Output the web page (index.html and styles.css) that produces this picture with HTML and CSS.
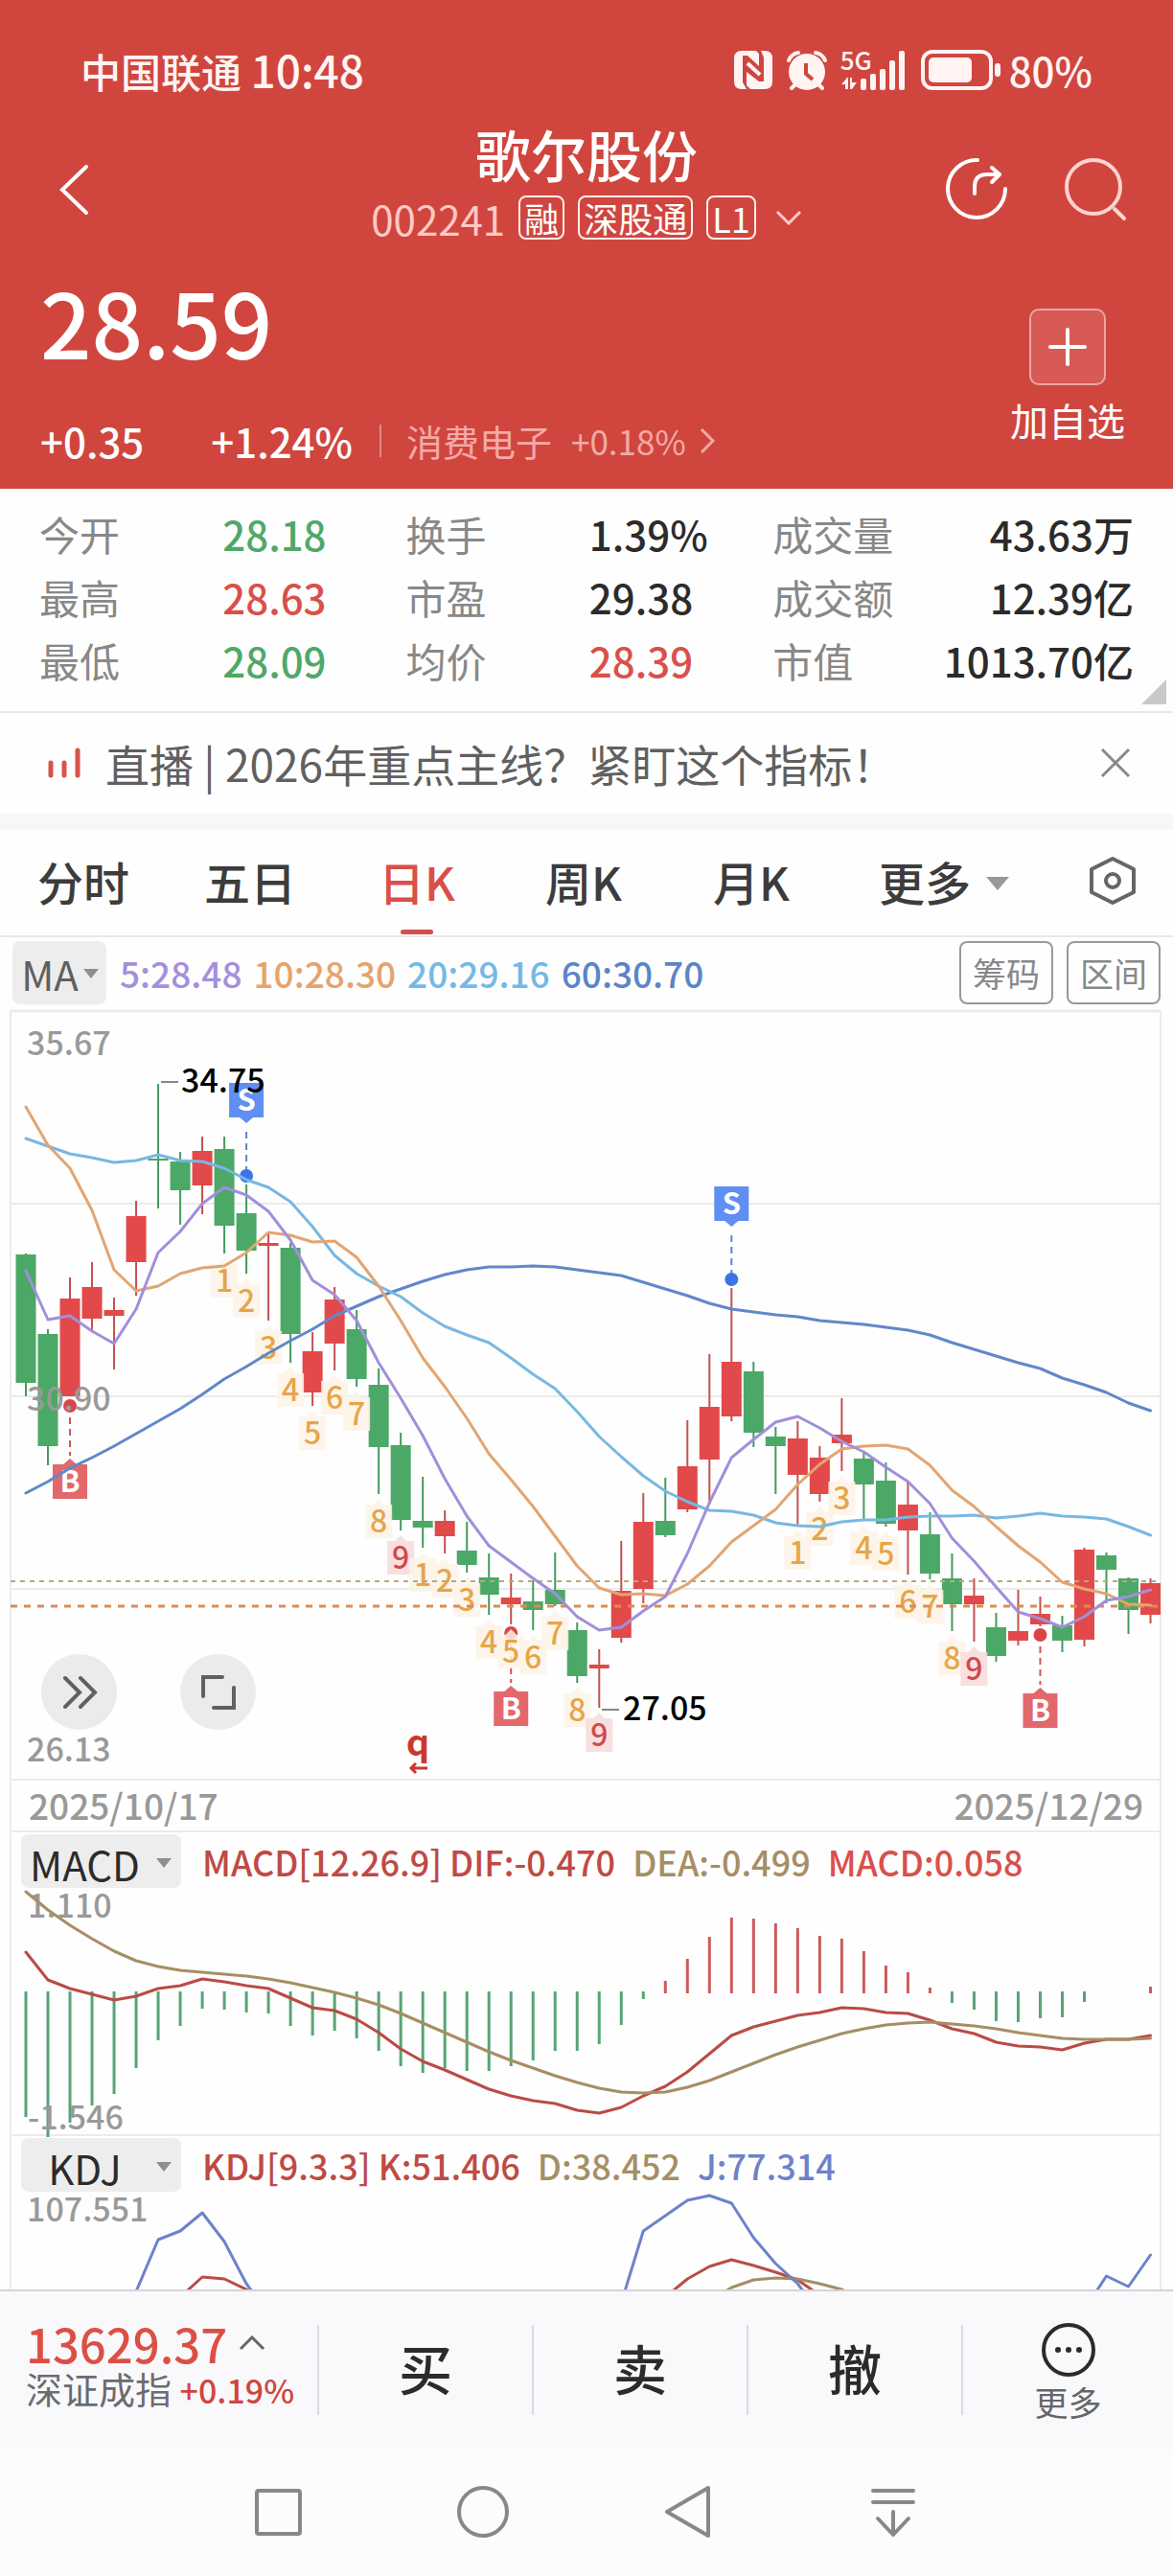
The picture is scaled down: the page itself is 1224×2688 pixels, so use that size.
FILE: index.html
```html
<!DOCTYPE html>
<html lang="zh-CN">
<head>
    <meta charset="UTF-8">
    <meta name="viewport" content="width=device-width, initial-scale=1.0">
    <title>歌尔股份 002241</title>
    <link rel="stylesheet" href="styles.css">
</head>
<body>

<header class="top">
    <div class="status">
        <span>中国联通 <span class="clock">10:48</span></span>
        <div class="status-icons">
            <svg width="42" height="42" viewBox="0 0 42 42">
                <path fill="#fff4f2" d="M9 1H24L27 4V17L15 6H10V34L14 41H9Q1 41 1 33V9Q1 1 9 1Z"/>
                <path fill="#fff4f2" d="M29 1H33Q41 1 41 9V33Q41 41 33 41H18L14 37V23L27 33H32V8Z"/>
                <path fill="none" stroke="#fff4f2" stroke-width="4" d="M15 14L28 26"/>
            </svg>
            <svg class="alarm" width="42" height="42" viewBox="0 0 42 42">
                <circle cx="21" cy="23" r="19" fill="#fff4f2"/>
                <path d="M2 11Q5 4 12 3M40 11Q37 4 30 3M5 40L10 35M37 40L32 35" fill="none" stroke="#fff4f2" stroke-width="4" stroke-linecap="round"/>
                <path d="M20 14V25L27 31" fill="none" stroke="#d0463f" stroke-width="4"/>
            </svg>
            <div class="signal">
                <span>5G</span>
                <svg width="70" height="42" viewBox="0 0 70 42" fill="#fff4f2">
                    <path d="M1 36L7 29H8V41H5V36ZM10 29H12V34H17L12 41H10Z"/>
                    <rect x="21" y="30" width="6" height="12" rx="2"/>
                    <rect x="31" y="25" width="6" height="17" rx="2"/>
                    <rect x="41" y="20" width="6" height="22" rx="2"/>
                    <rect x="51" y="11" width="6" height="31" rx="2"/>
                    <rect x="61" y="1" width="6" height="41" rx="2"/>
                </svg>
            </div>
            <svg width="84" height="42" viewBox="0 0 84 42">
                <rect x="2" y="2" width="71" height="38" rx="10" fill="none" stroke="#fff4f2" stroke-width="4"/>
                <rect x="8" y="8" width="45" height="26" rx="5" fill="#fff4f2"/>
                <rect x="77" y="14" width="6" height="14" rx="3" fill="#fff4f2"/>
            </svg>
            <span class="battery">80%</span>
        </div>
    </div>

    <div class="titlebar">
        <button type="button" class="back" aria-label="返回">
            <svg width="32" height="54" viewBox="0 0 32 54" fill="none" stroke="#fff" stroke-width="4" stroke-linecap="round"><path d="M28 3L3 27L28 51"/></svg>
        </button>
        <div class="title">
            <h1>歌尔股份</h1>
            <div class="code">
                <span class="code-no">002241</span>
                <span class="tag">融</span>
                <span class="tag">深股通</span>
                <span class="tag">L1</span>
                <svg width="28" height="16" viewBox="0 0 28 16" fill="none" stroke="#ffc9c4" stroke-width="3"><path d="M2 2L14 14L26 2"/></svg>
            </div>
        </div>
        <div class="actions">
            <button type="button" aria-label="分享">
                <svg width="66" height="66" viewBox="0 0 66 66" fill="none" stroke="#fff" stroke-width="4" stroke-linecap="round" stroke-linejoin="round">
                    <path d="M34 2A30 30 0 1 0 63 32"/>
                    <path d="M31 37V30Q31 17 44 17H57M49 10L57 17L49 25"/>
                </svg>
            </button>
            <button type="button" aria-label="搜索">
                <svg width="66" height="66" viewBox="0 0 66 66" fill="none" stroke="#ffd3cf" stroke-width="4" stroke-linecap="round">
                    <circle cx="31" cy="30" r="28"/>
                    <path d="M53 53L63 63"/>
                </svg>
            </button>
        </div>
    </div>

    <div class="quote">
        <div>
            <div class="price">28.59</div>
            <div class="change">
                <span>+0.35</span>
                <span>+1.24%</span>
                <a href="#" class="sector">
                    <span class="sector-name">消费电子</span>
                    <span>+0.18%</span>
                    <svg width="16" height="28" viewBox="0 0 16 28" fill="none" stroke="#f3aaa6" stroke-width="3"><path d="M2 2L14 14L2 26"/></svg>
                </a>
            </div>
        </div>
        <button type="button" class="add">
            <span class="add-box">
                <svg width="40" height="40" viewBox="0 0 40 40" stroke="#fff" stroke-width="4" stroke-linecap="round"><path d="M20 2V38M2 20H38"/></svg>
            </span>
            加自选
        </button>
    </div>
</header>

<section class="stats">
    <table>
        <tr><th>今开</th><td class="green">28.18</td><th>换手</th><td>1.39%</td><th>成交量</th><td>43.63万</td></tr>
        <tr><th>最高</th><td class="red">28.63</td><th>市盈</th><td>29.38</td><th>成交额</th><td>12.39亿</td></tr>
        <tr><th>最低</th><td class="green">28.09</td><th>均价</th><td class="red">28.39</td><th>市值</th><td>1013.70亿</td></tr>
    </table>
</section>

<section class="live">
    <svg width="34" height="32" viewBox="0 0 34 32" stroke="#d9534a" stroke-width="5" stroke-linecap="round"><path d="M3 16V29M17 16V29M31 3V29"/></svg>
    <a href="#">直播 | 2026年重点主线？紧盯这个指标！</a>
    <button type="button" aria-label="关闭">
        <svg width="32" height="32" viewBox="0 0 32 32" stroke="#888" stroke-width="3"><path d="M2 2L30 30M30 2L2 30"/></svg>
    </button>
</section>

<nav class="tabs">
    <button type="button">分时</button>
    <button type="button">五日</button>
    <button type="button" class="active">日K</button>
    <button type="button">周K</button>
    <button type="button">月K</button>
    <button type="button" class="more">更多</button>
    <button type="button" aria-label="设置">
        <svg width="50" height="52" viewBox="0 0 50 52" fill="none" stroke="#666" stroke-width="4" stroke-linejoin="round">
            <path d="M25 3L47 14V38L25 49L3 38V14Z"/>
            <circle cx="25" cy="26" r="7"/>
        </svg>
    </button>
</nav>

<div class="ma-row">
    <div class="pick pick-ma">
        <select aria-label="主图指标"><option>MA</option><option>BOLL</option></select>
    </div>
    <div class="ma-values">
        <span class="ma5">5:28.48</span>
        <span class="ma10">10:28.30</span>
        <span class="ma20">20:29.16</span>
        <span class="ma60">60:30.70</span>
    </div>
    <button type="button">筹码</button>
    <button type="button">区间</button>
</div>

<main class="charts">
    <div class="kline">
        <svg id="kline" viewBox="12 0 1198 804"></svg>
        <div class="tools">
            <button type="button" aria-label="快进">
                <svg width="36" height="36" viewBox="0 0 36 36"><path d="M3 3L18 18L3 33M19 3L34 18L19 33"/></svg>
            </button>
            <button type="button" aria-label="全屏">
                <svg width="36" height="36" viewBox="0 0 36 36"><path d="M2 22V2H22M34 13V34H13"/></svg>
            </button>
        </div>
    </div>
    <div class="dates"><span>2025/10/17</span><span>2025/12/29</span></div>

    <section class="panel">
        <div class="panel-head">
            <div class="pick">
                <select aria-label="副图指标一"><option>MACD</option><option>KDJ</option></select>
            </div>
            <span class="dif">MACD[12.26.9] DIF:-0.470</span>
            <span class="dea">DEA:-0.499</span>
            <span class="red">MACD:0.058</span>
        </div>
        <svg id="macd" viewBox="12 62 1198 253"></svg>
    </section>

    <section class="panel panel-cut">
        <div class="panel-head">
            <div class="pick">
                <select aria-label="副图指标二"><option>KDJ</option><option>MACD</option></select>
            </div>
            <span class="dif">KDJ[9.3.3] K:51.406</span>
            <span class="dea">D:38.452</span>
            <span class="jval">J:77.314</span>
        </div>
        <svg id="kdj" viewBox="12 62 1198 98"></svg>
    </section>
</main>

<footer class="trade">
    <button type="button" class="index">
        <span class="index-value">13629.37
            <svg width="28" height="16" viewBox="0 0 28 16" fill="none" stroke="#666" stroke-width="3"><path d="M2 14L14 2L26 14"/></svg>
        </span>
        <span class="index-name">深证成指 <em>+0.19%</em></span>
    </button>
    <button type="button">买</button>
    <button type="button">卖</button>
    <button type="button">撤</button>
    <button type="button" class="trade-more">
        <svg width="56" height="56" viewBox="0 0 56 56">
            <circle cx="28" cy="28" r="26" fill="none" stroke="#2b2b2b" stroke-width="4"/>
            <g fill="#2b2b2b"><circle cx="17" cy="28" r="3"/><circle cx="28" cy="28" r="3"/><circle cx="39" cy="28" r="3"/></g>
        </svg>
        更多
    </button>
</footer>

<div class="sysnav">
    <button type="button" aria-label="最近任务"><svg width="56" height="56" viewBox="0 0 56 56"><rect x="6" y="6" width="45" height="45" rx="2"/></svg></button>
    <button type="button" aria-label="主页"><svg width="56" height="56" viewBox="0 0 56 56"><circle cx="28" cy="28" r="25"/></svg></button>
    <button type="button" aria-label="后退"><svg width="56" height="56" viewBox="0 0 56 56"><path d="M49 3V53L6 28Z"/></svg></button>
    <button type="button" aria-label="收起"><svg width="56" height="56" viewBox="0 0 56 56"><path d="M7 6H49M7 18H49M28 28V52M12 35L28 52L44 35"/></svg></button>
</div>

<script src="script.js"></script>
</body>
</html>
```
FILE: styles.css
```css
* {
    box-sizing: border-box;
}

body {
    margin: 0;
    min-height: 100vh;
    background-color: #fefefe;
    color: #2b2b2b;
    font-family: "Noto Sans CJK SC", "Noto Sans", sans-serif;
    font-size: 36px;
}

button,
select {
    margin: 0;
    padding: 0;
    border: none;
    background: none;
    color: inherit;
    font: inherit;
    cursor: pointer;
}

a {
    color: inherit;
    text-decoration: none;
}

svg {
    display: block;
}

.red {
    color: #d9504a;
}

.green {
    color: #50a868;
}

/* Header */
.top {
    background-color: #d0463f;
    color: #fff;
}

.status {
    display: flex;
    justify-content: space-between;
    align-items: center;
    height: 126px;
    padding: 20px 84px 0;
    color: #fff4f2;
    font-size: 42px;
    font-weight: 500;
    line-height: 48px;
}

.clock {
    font-size: 46px;
}

.status-icons {
    display: flex;
    align-items: center;
    gap: 14px;
}

.signal {
    position: relative;
}

.signal span {
    position: absolute;
    top: 0;
    left: 0;
    font-size: 26px;
    line-height: 20px;
}

.battery {
    margin-left: -6px;
}

.titlebar {
    display: grid;
    grid-template-columns: 1fr auto 1fr;
    align-items: center;
    padding: 2px 48px 0;
}

.back {
    justify-self: start;
    margin-left: 14px;
}

.title {
    display: flex;
    flex-direction: column;
    align-items: center;
    height: 140px;
}

h1 {
    margin: 0;
    font-size: 58px;
    font-weight: 500;
    line-height: 64px;
}

.code {
    display: flex;
    align-items: center;
    gap: 14px;
    height: 70px;
    font-size: 36px;
}

.code-no {
    color: #ffc9c4;
    font-size: 42px;
}

.code svg {
    margin-left: 6px;
}

.tag {
    padding: 0 4px;
    border: 2px solid #ffeeec;
    border-radius: 8px;
    line-height: 42px;
}

.actions {
    display: flex;
    justify-content: flex-end;
    gap: 58px;
}

.quote {
    display: flex;
    justify-content: space-between;
    height: 242px;
    padding: 12px 50px 0 42px;
}

.price {
    font-size: 94px;
    font-weight: 500;
    line-height: 108px;
}

.change {
    display: flex;
    align-items: center;
    gap: 70px;
    margin-top: 42px;
    font-size: 42px;
    font-weight: 500;
    line-height: 60px;
}

.sector {
    display: flex;
    align-items: center;
    gap: 14px;
    margin-left: -42px;
    padding-left: 26px;
    border-left: 2px solid #e08a85;
    color: #f3aaa6;
    font-size: 35px;
    font-weight: 400;
    line-height: 34px;
}

.sector-name {
    margin-right: 6px;
    font-size: 38px;
}

.add {
    display: flex;
    flex-direction: column;
    align-items: center;
    gap: 10px;
    margin-top: 42px;
    font-size: 40px;
    line-height: 52px;
}

.add-box {
    display: flex;
    align-items: center;
    justify-content: center;
    width: 80px;
    height: 80px;
    border: 2px solid #eaa5a1;
    border-radius: 10px;
    background-color: #d75a54;
}

/* Figures */
.stats {
    position: relative;
    height: 234px;
    padding: 14px 41px 0;
    border-bottom: 2px solid #e8e8e8;
}

.stats::after {
    content: "";
    position: absolute;
    right: 7px;
    bottom: 7px;
    border-left: 26px solid transparent;
    border-bottom: 26px solid #c9c9c9;
}

.stats table {
    width: 100%;
    table-layout: fixed;
    border-collapse: collapse;
}

.stats th,
.stats td {
    height: 66px;
    padding: 0;
    text-align: left;
    font-size: 42px;
    font-weight: 400;
    line-height: 66px;
    white-space: nowrap;
}

.stats td {
    font-weight: 500;
}

.stats th {
    color: #888;
}

.stats th:nth-child(5) {
    width: 11%;
}

.stats td:last-child {
    width: 22%;
    text-align: right;
}

/* Live banner */
.live {
    display: flex;
    align-items: center;
    gap: 26px;
    height: 122px;
    padding: 0 44px 2px 50px;
    border-bottom: 17px solid #f7f7f7;
    color: #606060;
    font-size: 46px;
}

.live a {
    flex: 1;
}

/* Period tabs */
.tabs {
    display: grid;
    grid-template-columns: 174fr 174fr 174fr 174fr 176fr 226fr 126fr;
    height: 112px;
    border-bottom: 2px solid #e8e8e8;
    color: #3c3c3c;
    font-size: 48px;
    font-weight: 500;
}

.tabs button {
    position: relative;
    display: flex;
    align-items: center;
    justify-content: center;
    padding-bottom: 4px;
}

.tabs .active {
    color: #d9504a;
}

.tabs .active::after {
    content: "";
    position: absolute;
    bottom: 1px;
    width: 34px;
    height: 5px;
    border-radius: 3px;
    background-color: #d0504e;
}

.more {
    gap: 16px;
}

.more::after {
    content: "";
    margin-top: 6px;
    border: 12px solid transparent;
    border-top: 14px solid #999;
    border-bottom: none;
}

/* Moving averages */
.ma-row {
    display: flex;
    align-items: center;
    gap: 14px;
    height: 76px;
    padding: 0 13px 2px;
}

.ma-row button {
    width: 98px;
    height: 66px;
    border: 2px solid #999;
    border-radius: 8px;
    color: #888;
    font-size: 35px;
    line-height: 60px;
}

.ma-values {
    display: flex;
    flex: 1;
    gap: 12px;
    font-size: 37px;
    font-weight: 500;
}

.ma5 { color: #a48fdc; }
.ma10 { color: #e5a46c; }
.ma20 { color: #74b9e6; }
.ma60 { color: #5c84c8; }

.pick {
    position: relative;
    width: 167px;
    height: 56px;
    border-radius: 8px;
    background-color: #ededed;
}

.pick select {
    width: 100%;
    height: 100%;
    padding: 0 34px 0 0;
    appearance: none;
    font-size: 42px;
    font-weight: 400;
    text-align: center;
    text-align-last: center;
}

.pick::after {
    content: "";
    position: absolute;
    top: 25px;
    right: 10px;
    border: 8px solid transparent;
    border-top: 10px solid #8f8f8f;
    border-bottom: none;
    pointer-events: none;
}

.pick-ma {
    width: 98px;
    height: 66px;
    color: #606060;
}

.pick-ma select {
    padding: 0 20px 0 0;
}

.pick-ma::after {
    top: 29px;
    right: 8px;
}

/* Charts */
.charts {
    margin: 0 12px 0 10px;
    border: 2px solid #ebebeb;
    border-top: none;
    border-bottom: none;
}

.charts svg {
    width: 100%;
    overflow: visible;
    font-family: "Noto Sans CJK SC", "Noto Sans", sans-serif;
    font-weight: 500;
}

.kline {
    position: relative;
}

.tools {
    position: absolute;
    left: 31px;
    bottom: 53px;
    display: flex;
    gap: 66px;
}

.tools button {
    display: flex;
    align-items: center;
    justify-content: center;
    width: 79px;
    height: 79px;
    border-radius: 50%;
    background-color: #ebebeb;
}

.tools svg {
    width: 36px;
    fill: none;
    stroke: #606060;
    stroke-width: 4;
    stroke-linecap: round;
}

.dates {
    display: flex;
    justify-content: space-between;
    height: 52px;
    padding: 0 17px 0 18px;
    color: #999;
    font-size: 37px;
    font-weight: 500;
    line-height: 50px;
}

.panel {
    border-top: 2px solid #ebebeb;
}

.panel-cut {
    overflow: hidden;
}

.panel-head {
    display: flex;
    align-items: center;
    gap: 18px;
    height: 62px;
    padding: 0 10px 2px;
    font-size: 36px;
    font-weight: 500;
    white-space: nowrap;
}

.panel-head .dif {
    margin-left: 4px;
}

.dif { color: #bf4a44; }
.dea { color: #a68e64; }
.jval { color: #6d82ca; }

/* Trade bar */
.trade {
    display: grid;
    grid-template-columns: 333fr 224fr 224fr 224fr 219fr;
    align-items: center;
    height: 166px;
    border-top: 2px solid #d5d5d8;
    background-color: #f9f9fc;
}

.trade button {
    height: 94px;
    padding-bottom: 6px;
    border-right: 2px solid #dcdce0;
    font-size: 56px;
    font-weight: 500;
    line-height: 86px;
}

.trade .index {
    display: flex;
    flex-direction: column;
    padding: 0 0 0 27px;
    text-align: left;
}

.index-value {
    display: flex;
    align-items: center;
    gap: 12px;
    color: #dc4f45;
    font-size: 49px;
    line-height: 38px;
}

.index-name {
    color: #6b6b70;
    font-size: 38px;
    font-weight: 400;
    line-height: 56px;
}

.index-name em {
    color: #d0463f;
    font-size: 34px;
    font-style: normal;
    font-weight: 500;
}

.trade .trade-more {
    display: flex;
    flex-direction: column;
    align-items: center;
    gap: 2px;
    height: 114px;
    padding: 8px 0 0;
    border-right: none;
    color: #666;
    font-size: 35px;
    font-weight: 400;
    line-height: 48px;
}

.sysnav {
    display: flex;
    align-items: center;
    justify-content: space-between;
    height: 132px;
    padding: 0 264px 0 262px;
    background-color: #fcfcfc;
}

.sysnav svg {
    fill: none;
    stroke: #888;
    stroke-width: 4;
    stroke-linecap: round;
    stroke-linejoin: round;
}
```
FILE: script.js
```js
const RED = '#e2494a';
const GREEN = '#4ca866';
const x = i => 27 + i * 23.01;

// direction, high, body top, body bottom, low
const candles = [
    ['g', 254, 255, 389, 403], ['g', 333, 338, 455, 475], ['r', 279, 301, 403, 403], ['r', 263, 289, 322, 335],
    ['r', 300, 313, 319, 375], ['r', 199, 215, 263, 298], ['g', 77, 155, 157, 207], ['g', 148, 158, 188, 224],
    ['r', 132, 147, 183, 213], ['g', 132, 145, 225, 254], ['g', 182, 212, 251, 275], ['r', 233, 243, 246, 324],
    ['g', 243, 248, 338, 368], ['r', 336, 356, 399, 413], ['r', 289, 302, 348, 376], ['g', 313, 333, 385, 393],
    ['g', 374, 391, 456, 505], ['g', 441, 454, 532, 543], ['g', 487, 533, 540, 561], ['r', 522, 533, 549, 567],
    ['g', 534, 564, 579, 587], ['g', 567, 592, 610, 631], ['r', 588, 613, 620, 641], ['g', 595, 617, 626, 647],
    ['g', 566, 605, 620, 622], ['g', 639, 647, 695, 702], ['r', 667, 683, 687, 728], ['r', 554, 606, 655, 660],
    ['r', 504, 534, 604, 619], ['g', 488, 533, 548, 550], ['r', 428, 476, 521, 524], ['r', 359, 414, 469, 516],
    ['r', 290, 367, 424, 429], ['g', 367, 377, 441, 456], ['g', 435, 445, 455, 505], ['r', 429, 447, 485, 538],
    ['r', 455, 467, 505, 513], ['r', 405, 443, 452, 481], ['g', 461, 468, 495, 533], ['g', 472, 491, 536, 539],
    ['r', 493, 516, 543, 589], ['g', 524, 547, 588, 594], ['g', 567, 593, 620, 648], ['r', 593, 611, 620, 659],
    ['g', 629, 644, 674, 680], ['r', 605, 648, 658, 663], ['r', 612, 630, 641, 643], ['g', 632, 642, 658, 670],
    ['r', 561, 563, 657, 664], ['g', 566, 569, 584, 619], ['g', 592, 593, 626, 651], ['r', 593, 598, 631, 640]
];

const ma5 = [272, 323, 319, 335, 348, 312, 253, 231, 202, 185, 193, 210, 240, 282, 297, 324, 368, 405, 444, 489, 528, 559, 576, 593, 609, 633, 647, 644, 627, 612, 567, 514, 467, 448, 430, 424, 436, 450, 461, 477, 492, 515, 551, 575, 602, 628, 635, 644, 633, 616, 612, 605];
const ma10 = [101, 141, 165, 209, 271, 293, 288, 275, 269, 267, 253, 232, 235, 242, 241, 258, 288, 324, 363, 393, 426, 463, 490, 518, 549, 580, 603, 610, 609, 611, 599, 580, 555, 538, 521, 495, 474, 458, 455, 454, 458, 475, 501, 518, 539, 559, 576, 597, 604, 609, 620, 621];
const ma20 = [134, 142, 150, 154, 159, 157, 151, 157, 158, 165, 177, 185, 200, 226, 256, 275, 288, 299, 316, 330, 339, 347, 363, 380, 395, 419, 445, 466, 486, 502, 513, 522, 523, 527, 535, 538, 539, 534, 532, 532, 529, 528, 528, 527, 530, 528, 525, 528, 529, 531, 539, 548];
const ma60 = [504, 492, 478, 467, 455, 442, 429, 416, 401, 385, 372, 358, 345, 333, 319, 309, 299, 291, 283, 276, 271, 268, 268, 267, 268, 271, 274, 277, 284, 291, 298, 306, 312, 315, 318, 320, 324, 326, 328, 331, 334, 339, 347, 354, 361, 368, 374, 384, 391, 399, 410, 418];

// candle index -> count under the low
const counts = {
    9: 1, 10: 2, 11: 3, 12: 4, 13: 5, 14: 6, 15: 7, 16: 8, 17: 9,
    18: 1, 19: 2, 20: 3, 21: 4, 22: 5, 23: 6, 24: 7, 25: 8, 26: 9,
    35: 1, 36: 2, 37: 3, 38: 4, 39: 5, 40: 6, 41: 7, 42: 8, 43: 9
};

const hist = [297, 318, 303, 285, 273, 246, 217, 202, 184, 185, 188, 189, 202, 212, 207, 215, 228, 244, 251, 246, 249, 249, 244, 238, 228, 228, 221, 201, 174, 155, 132, 109, 89, 90, 95, 100, 108, 111, 124, 139, 146, 162, 178, 185, 197, 198, 194, 193, 177, null, null, 161];
const dif = [125, 154, 163, 169, 175, 171, 163, 160, 153, 156, 160, 163, 173, 183, 186, 195, 209, 226, 239, 248, 258, 268, 275, 280, 283, 290, 293, 287, 275, 265, 250, 231, 212, 203, 197, 191, 188, 183, 184, 188, 189, 196, 205, 210, 219, 223, 224, 227, 220, 216, 216, 212];
const dea = [62, 81, 97, 111, 124, 134, 140, 144, 146, 148, 150, 153, 157, 162, 167, 173, 180, 189, 199, 209, 219, 229, 238, 246, 254, 261, 267, 271, 272, 271, 266, 259, 250, 241, 232, 224, 217, 210, 205, 201, 199, 198, 200, 202, 205, 209, 212, 215, 216, 216, 216, 215];

function line(values, color, start = 0, width = 3) {
    const points = values.map((v, i) => `${x(i + start)},${v}`).join(' ');
    return `<polyline points="${points}" fill="none" stroke="${color}" stroke-width="${width}" stroke-linejoin="round" stroke-linecap="round"/>`;
}

function rule(y, color, width = 2, dash = '') {
    return `<path d="M11 ${y}H1211" stroke="${color}" stroke-width="${width}" stroke-dasharray="${dash}"/>`;
}

function text(tx, y, str, size, color, extra = '') {
    return `<text x="${tx}" y="${y}" font-size="${size}" fill="${color}" ${extra}>${str}</text>`;
}

function countTag(i) {
    const n = counts[i];
    const cx = x(i);
    const top = candles[i][4] + 11;
    const fill = n === 9 ? '#f8dadb' : '#fdf3e6';
    const color = n === 9 ? '#d04a4c' : '#e6a54a';
    return `<path d="M${cx - 14} ${top}H${cx - 6}L${cx} ${top - 6}L${cx + 6} ${top}H${cx + 14}V${top + 35}H${cx - 14}Z" fill="${fill}" fill-opacity="0.85"/>` +
        text(cx, top + 29, n, 32, color, 'text-anchor="middle"');
}

function sellMark(i, cy) {
    const cx = x(i);
    const top = cy - 97;
    return `<path d="M${cx} ${cy - 46}V${cy - 6}" stroke="#5b86d0" stroke-width="2" stroke-dasharray="7 5"/>` +
        `<circle cx="${cx}" cy="${cy}" r="7" fill="#3c74e8"/>` +
        `<path d="M${cx - 18} ${top}H${cx + 18}V${top + 36}H${cx + 7}L${cx} ${top + 42}L${cx - 7} ${top + 36}H${cx - 18}Z" fill="#5f8ff3"/>` +
        text(cx, top + 29, 'S', 31, '#fff', 'text-anchor="middle" font-weight="700"');
}

function buyMark(i, cy) {
    const cx = x(i);
    const top = cy + 61;
    return `<path d="M${cx} ${cy + 12}V${cy + 52}" stroke="#cf5557" stroke-width="2" stroke-dasharray="7 5"/>` +
        `<circle cx="${cx}" cy="${cy}" r="7" fill="#dc4548"/>` +
        `<path d="M${cx - 18} ${top}H${cx - 7}L${cx} ${top - 6}L${cx + 7} ${top}H${cx + 18}V${top + 36}H${cx - 18}Z" fill="#e2686c"/>` +
        text(cx, top + 29, 'B', 31, '#fff', 'text-anchor="middle" font-weight="700"');
}

function drawKline() {
    let out = rule(1, '#ebebeb', 3) + [202, 403, 604, 803].map(y => rule(y, '#ebebeb')).join('');
    candles.forEach(([dir, high, top, bottom, low], i) => {
        const color = dir === 'r' ? RED : GREEN;
        const wick = dir === 'r' ? '#c4504f' : '#439b5d';
        out += `<path d="M${x(i)} ${high}V${low}" stroke="${wick}" stroke-width="2"/>`;
        out += `<rect x="${x(i) - 10.5}" y="${top}" width="21" height="${bottom - top}" fill="${color}"/>`;
    });
    out += buyMark(2, 413) + buyMark(22, 650) + buyMark(46, 652);
    out += sellMark(10, 173) + sellMark(32, 281);
    out += Object.keys(counts).map(i => countTag(Number(i))).join('');
    out += rule(596, '#b9a77c', 2, '5 5') + rule(622, '#dc8c50', 3, '7 7');
    out += line(ma60, '#6088c9') + line(ma20, '#77b8e3') + line(ma10, '#e3a571') + line(ma5, '#a18fdb');
    out += text(28, 47, '35.67', 34, '#999') + text(28, 418, '30.90', 34, '#999') + text(28, 784, '26.13', 34, '#999');
    out += '<path d="M168 75H186M628 730H646" stroke="#888" stroke-width="2"/>';
    out += text(189, 86, '34.75', 34, '#000') + text(650, 741, '27.05', 34, '#000');
    out += text(436, 778, 'q', 38, '#cc372d', 'text-anchor="middle" font-weight="700"');
    out += '<path d="M446 791H429M434 786L429 791L434 796" fill="none" stroke="#cc372d" stroke-width="3"/>';
    document.getElementById('kline').innerHTML = out;
}

function drawMacd() {
    let out = '';
    hist.forEach((v, i) => {
        if (v === null) return;
        out += v < 168 && v !== 166
            ? `<path d="M${x(i)} ${v}V168" stroke="#cd5a5a" stroke-width="3"/>`
            : `<path d="M${x(i)} 166V${v}" stroke="#56a574" stroke-width="3"/>`;
    });
    out += text(29, 89, '1.110', 34, '#999') + text(29, 310, '-1.546', 34, '#999');
    out += line(dif, '#bb4b45') + line(dea, '#a68e64');
    document.getElementById('macd').innerHTML = out;
}

function drawKdj() {
    const blue = '#6d82ca';
    let out = text(28, 89, '107.551', 34, '#999');
    out += line([168, 147, 149, 160, 180], '#bb4b45', 7) + line([168, 149, 136, 129, 135, 142, 150, 166], '#bb4b45', 29);
    out += line([172, 158, 150, 148, 149, 154, 160, 172], '#a68e64', 31);
    out += line([215, 162, 108, 99, 80, 110, 154, 185], blue, 4);
    out += line([174, 99, 83, 67, 62, 70, 106, 133, 154, 185], blue, 27);
    out += line([181, 146, 157, 124], blue, 48);
    document.getElementById('kdj').innerHTML = out;
}

drawKline();
drawMacd();
drawKdj();
```
